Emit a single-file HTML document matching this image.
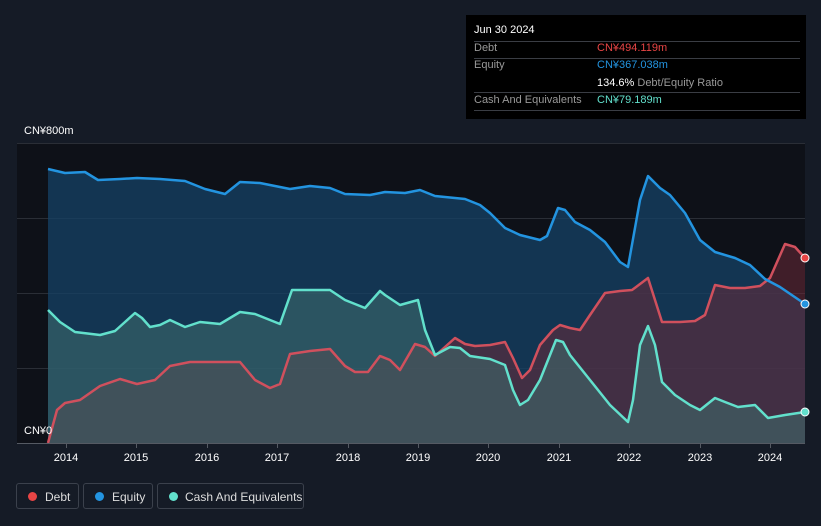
<!DOCTYPE html>
<html><head><style>
body{margin:0;width:821px;height:526px;background:#151b26;font-family:"Liberation Sans",sans-serif;overflow:hidden;position:relative}
.tt{position:absolute;left:466px;top:15px;width:340px;height:104px;background:#000;color:#fff;font-size:11px}
.tt .r{position:absolute;left:8px;right:6px;height:17px;line-height:17px}
.g{color:#999}
.leg{position:absolute;top:483px;height:26px;border:1px solid #3b414c;border-radius:3px;color:#ddd;font-size:12px;line-height:26px;box-sizing:border-box}
.leg i{position:absolute;left:11px;top:8px;width:9px;height:9px;border-radius:50%}
.lab{position:absolute;color:#fff;font-size:11px}
</style></head><body>
<svg width="821" height="526" style="position:absolute;left:0;top:0">
<rect x="17" y="143" width="788" height="300" fill="#0e1118"/>
<g stroke="#2a2e36" stroke-width="1">
<line x1="17" y1="143.5" x2="805" y2="143.5"/><line x1="17" y1="218.5" x2="805" y2="218.5"/><line x1="17" y1="293.5" x2="805" y2="293.5"/><line x1="17" y1="368.5" x2="805" y2="368.5"/>
</g>
<polygon fill="#164166" fill-opacity="0.75" points="48,443 48,169 65,173 85,172 98,180 120,179 137,178 160,179 185,181 205,189 225,194 240,182 260,183 290,189 310,186 330,188 345,194 370,195 385,192 405,193 420,190 435,196 465,199 480,205 490,213 505,228 520,235 540,240 547,236 558,208 565,210 575,222 590,230 605,242 620,262 628,267 640,200 648,176 660,188 670,195 685,213 700,240 715,252 735,258 750,265 765,279 780,287 805,304 805,443"/>
<polygon fill="#6a2a38" fill-opacity="0.55" points="48,443 57,410 65,403 80,400 100,386 120,379 137,384 155,380 170,366 190,362 240,362 255,380 270,388 280,384 290,354 310,351 330,349 345,366 355,372 368,372 380,356 390,360 400,370 415,344 425,347 435,356 445,347 455,338 465,344 475,346 490,345 505,342 513,358 522,378 530,370 540,345 553,330 560,325 570,328 580,330 590,315 605,293 620,291 632,290 648,278 662,322 680,322 695,321 705,315 715,285 730,288 745,288 760,286 770,278 785,244 795,247 805,258 805,443"/>
<polygon fill="#3f6d6e" fill-opacity="0.55" points="48,443 48,310 60,322 75,332 100,335 115,331 125,322 135,313 142,318 150,327 160,325 170,320 185,327 200,322 220,324 240,312 255,314 265,318 280,324 292,290 330,290 345,300 365,308 380,291 385,295 400,305 418,300 425,330 435,355 450,347 460,348 470,356 490,359 505,365 513,390 520,405 528,400 540,380 548,360 556,340 563,342 570,355 590,380 610,405 628,422 633,400 640,345 648,326 655,345 662,382 675,395 690,405 700,410 715,398 725,402 738,407 755,405 768,418 785,415 805,412 805,443"/>
<g fill="none" stroke-width="2.5" stroke-linejoin="round">
<polyline stroke="#d0505d" points="48,443 57,410 65,403 80,400 100,386 120,379 137,384 155,380 170,366 190,362 240,362 255,380 270,388 280,384 290,354 310,351 330,349 345,366 355,372 368,372 380,356 390,360 400,370 415,344 425,347 435,356 445,347 455,338 465,344 475,346 490,345 505,342 513,358 522,378 530,370 540,345 553,330 560,325 570,328 580,330 590,315 605,293 620,291 632,290 648,278 662,322 680,322 695,321 705,315 715,285 730,288 745,288 760,286 770,278 785,244 795,247 805,258"/>
<polyline stroke="#2394e0" points="48,169 65,173 85,172 98,180 120,179 137,178 160,179 185,181 205,189 225,194 240,182 260,183 290,189 310,186 330,188 345,194 370,195 385,192 405,193 420,190 435,196 465,199 480,205 490,213 505,228 520,235 540,240 547,236 558,208 565,210 575,222 590,230 605,242 620,262 628,267 640,200 648,176 660,188 670,195 685,213 700,240 715,252 735,258 750,265 765,279 780,287 805,304"/>
<polyline stroke="#62e0cc" points="48,310 60,322 75,332 100,335 115,331 125,322 135,313 142,318 150,327 160,325 170,320 185,327 200,322 220,324 240,312 255,314 265,318 280,324 292,290 330,290 345,300 365,308 380,291 385,295 400,305 418,300 425,330 435,355 450,347 460,348 470,356 490,359 505,365 513,390 520,405 528,400 540,380 548,360 556,340 563,342 570,355 590,380 610,405 628,422 633,400 640,345 648,326 655,345 662,382 675,395 690,405 700,410 715,398 725,402 738,407 755,405 768,418 785,415 805,412"/>
</g>
<circle cx="805" cy="258" r="4" fill="#e84545" stroke="#fff" stroke-width="1"/>
<circle cx="805" cy="304" r="4" fill="#2394e0" stroke="#fff" stroke-width="1"/>
<circle cx="805" cy="412" r="4" fill="#62e0cc" stroke="#fff" stroke-width="1"/>
<line x1="17" y1="443.5" x2="805" y2="443.5" stroke="#555a63"/>
<g stroke="#555a63"><line x1="66.5" y1="443" x2="66.5" y2="448"/><line x1="136.5" y1="443" x2="136.5" y2="448"/><line x1="207.5" y1="443" x2="207.5" y2="448"/><line x1="277.5" y1="443" x2="277.5" y2="448"/><line x1="348.5" y1="443" x2="348.5" y2="448"/><line x1="418.5" y1="443" x2="418.5" y2="448"/><line x1="488.5" y1="443" x2="488.5" y2="448"/><line x1="559.5" y1="443" x2="559.5" y2="448"/><line x1="629.5" y1="443" x2="629.5" y2="448"/><line x1="700.5" y1="443" x2="700.5" y2="448"/><line x1="770.5" y1="443" x2="770.5" y2="448"/></g>
<g fill="#fff" font-size="11" text-anchor="middle" font-family="Liberation Sans">
<text x="66" y="461">2014</text><text x="136" y="461">2015</text><text x="207" y="461">2016</text><text x="277" y="461">2017</text><text x="348" y="461">2018</text><text x="418" y="461">2019</text><text x="488" y="461">2020</text><text x="559" y="461">2021</text><text x="629" y="461">2022</text><text x="700" y="461">2023</text><text x="770" y="461">2024</text>
</g>
</svg>
<div class="lab" style="left:24px;top:125px">CN¥800m</div>
<div class="lab" style="left:24px;top:425px">CN¥0</div>
<div class="tt">
<div style="position:absolute;left:8px;top:9px;font-size:11px">Jun 30 2024</div>
<div style="position:absolute;left:8px;right:6px;top:26px;border-top:1px solid #3a3d44"></div>
<div style="position:absolute;left:8px;right:6px;top:43px;border-top:1px solid #3a3d44"></div>
<div style="position:absolute;left:8px;right:6px;top:77px;border-top:1px solid #3a3d44"></div>
<div style="position:absolute;left:8px;right:6px;top:95px;border-top:1px solid #3a3d44"></div>
<div class="r" style="top:25px"><span class="g">Debt</span><span style="position:absolute;left:123px;color:#e84545">CN¥494.119m</span></div>
<div class="r" style="top:42px"><span class="g">Equity</span><span style="position:absolute;left:123px;color:#2394e0">CN¥367.038m</span></div>
<div class="r" style="top:60px"><span style="position:absolute;left:123px">134.6% <span class="g">Debt/Equity Ratio</span></span></div>
<div class="r" style="top:77px"><span class="g">Cash And Equivalents</span><span style="position:absolute;left:123px;color:#62e0cc">CN¥79.189m</span></div>
</div>
<div class="leg" style="left:16px;width:63px"><i style="background:#e84545"></i><span style="padding-left:28px">Debt</span></div>
<div class="leg" style="left:83px;width:70px"><i style="background:#2394e0"></i><span style="padding-left:28px">Equity</span></div>
<div class="leg" style="left:157px;width:147px"><i style="background:#62e0cc"></i><span style="padding-left:27px">Cash And Equivalents</span></div>
</body></html>
